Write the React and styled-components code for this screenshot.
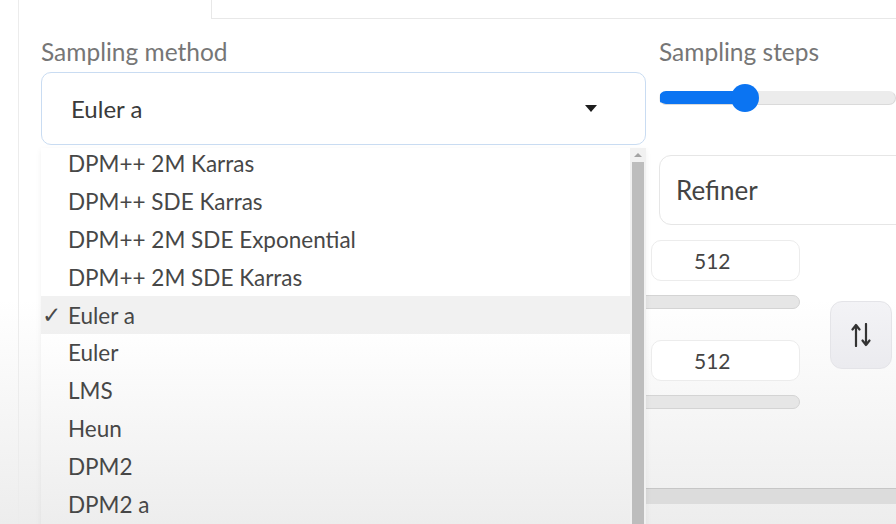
import React from 'react';
import styled, { createGlobalStyle } from 'styled-components';

const GlobalStyle = createGlobalStyle`
  html, body {
    margin: 0;
    padding: 0;
    background: #fff;
  }
  body {
    font-family: Lato, "Open Sans", sans-serif;
    color: #444;
  }
`;

const Page = styled.div`
  position: relative;
  width: 896px;
  height: 524px;
  overflow: hidden;
  background: linear-gradient(180deg, #fff 0, #fff 300px, #ededed 524px);
`;

const Panel = styled.div`
  margin-left: 18px;
  height: 100%;
  border-left: 1px solid #ececec;
`;

const TopBox = styled.div`
  margin-left: 192px;
  height: 18px;
  border-left: 1px solid #e8e8e8;
  border-bottom: 1px solid #e8e8e8;
  background: #fff;
`;

const Content = styled.div`
  padding-left: 22px;
`;

const TopGrid = styled.div`
  display: grid;
  grid-template-columns: 605px 1fr;
  column-gap: 13px;
  margin-top: 20px;
`;

const Field = styled.div`
  position: relative;
  display: flex;
  flex-direction: column;
`;

const Label = styled.div`
  font-size: 24.5px;
  line-height: 26px;
  color: #767676;
  margin-bottom: 7px;
  white-space: nowrap;
`;

const SelectBox = styled.div`
  box-sizing: border-box;
  height: 73px;
  display: flex;
  align-items: center;
  justify-content: space-between;
  padding: 0 48px 0 29px;
  border: 1px solid #c9dcf2;
  border-radius: 10px;
  background: #fff;
  font-size: 24px;
  color: #3a3a3a;
`;

const Caret = styled.span`
  width: 0;
  height: 0;
  border-left: 6px solid transparent;
  border-right: 6px solid transparent;
  border-top: 7px solid #1e1e1e;
`;

const Slider = styled.div`
  position: relative;
  margin-top: 12px;
  height: 28px;
  display: flex;
  align-items: center;
`;

const Track = styled.div`
  box-sizing: border-box;
  flex: 1;
  height: 14px;
  border-radius: 7px;
  border: 1px solid #dadada;
  background: ${p => (p.$value != null
    ? `linear-gradient(90deg, #0b74f2 0, #0b74f2 ${p.$value}px, #ececec ${p.$value}px)`
    : '#e5e5e5')};
  border-color: ${p => (p.$value != null ? 'transparent #dadada #dadada transparent' : '#d6d6d6')};
`;

const Thumb = styled.div`
  position: absolute;
  top: 0;
  width: 28px;
  height: 28px;
  border-radius: 50%;
  background: #0b74f2;
`;

const Dropdown = styled.div`
  position: absolute;
  top: calc(100% + 3px);
  left: 0;
  width: 605px;
  height: 400px;
  display: flex;
  overflow: hidden;
  background: linear-gradient(180deg, #fff 0, #fff 180px, #ededed 376px);
  box-shadow: 0 2px 6px rgba(0, 0, 0, 0.06);
  z-index: 5;
`;

const Options = styled.ul`
  flex: 1;
  list-style: none;
  margin: -3px 0 0;
  padding: 0;
`;

const Option = styled.li`
  display: flex;
  align-items: center;
  height: 37.8px;
  font-size: 22.5px;
  color: #474747;
  white-space: nowrap;
  background: ${p => (p.$selected ? 'rgba(0, 0, 0, 0.055)' : 'transparent')};
`;

const Check = styled.span`
  width: 26px;
  padding-left: 1px;
  font-family: "DejaVu Sans", sans-serif;
  font-size: 23px;
  color: #4a4a4a;
`;

const Scrollbar = styled.div`
  width: 16px;
  display: flex;
  flex-direction: column;
  align-items: center;
  background: #f1f1f1;
`;

const ScrollArrow = styled.span`
  margin-top: 5px;
  width: 0;
  height: 0;
  border-left: 4px solid transparent;
  border-right: 4px solid transparent;
  border-bottom: 4px solid #a3a3a3;
`;

const ScrollThumb = styled.div`
  margin-top: 5px;
  width: 12px;
  flex: 1;
  background: #bdbdbd;
`;

const LowerGrid = styled.div`
  display: grid;
  grid-template-columns: 560px 1fr;
  margin-top: 10px;
`;

const RightCol = styled.div`
  display: flex;
  flex-direction: column;
`;

const RefinerBox = styled.div`
  box-sizing: border-box;
  margin-left: 58px;
  height: 70px;
  margin-right: -20px;
  display: flex;
  align-items: center;
  padding-left: 16px;
  border: 1px solid #e6e6e6;
  border-radius: 12px;
  background: #fff;
  font-size: 26px;
  color: #444;
`;

const SizeRow = styled.div`
  display: flex;
  margin-top: 15px;
`;

const SizeCol = styled.div`
  width: 199px;
  display: flex;
  flex-direction: column;
`;

const NumberInput = styled.div`
  box-sizing: border-box;
  align-self: flex-end;
  width: 149px;
  height: 41px;
  margin-top: ${p => p.$top || 0}px;
  display: flex;
  align-items: center;
  padding-left: 42px;
  border: 1px solid #ececec;
  border-radius: 10px;
  background: #fff;
  font-size: 21px;
  color: #444;
`;

const SmallTrack = styled.div`
  box-sizing: border-box;
  margin-top: 14px;
  height: 14px;
  border-radius: 7px;
  border: 1px solid #d4d4d4;
  background: #e6e6e6;
`;

const SwapButton = styled.button`
  margin: 61px 0 0 30px;
  width: 62px;
  height: 68px;
  display: flex;
  align-items: center;
  justify-content: center;
  border: 1px solid #e4e4e8;
  border-radius: 12px;
  background: linear-gradient(180deg, #f3f3f6, #ebebef);
  color: #333;
  padding: 0;
`;

const BottomTrack = styled.div`
  margin-top: 79px;
  margin-right: -40px;
  height: 15px;
  border-top: 1px solid #c6c6c6;
  background: #dcdcdc;
`;

const SwapIcon = () => (
  <svg width="20" height="24" viewBox="0 0 20 24" fill="none" stroke="currentColor"
    strokeWidth="2.2" strokeLinecap="round" strokeLinejoin="round">
    <path d="M5 23V2M1.5 6.5L5 2l3.5 4.5" />
    <path d="M15 1v21M11.5 17.5L15 22l3.5-4.5" />
  </svg>
);

const samplers = [
  'DPM++ 2M Karras',
  'DPM++ SDE Karras',
  'DPM++ 2M SDE Exponential',
  'DPM++ 2M SDE Karras',
  'Euler a',
  'Euler',
  'LMS',
  'Heun',
  'DPM2',
  'DPM2 a',
];

const App = () => {
  const selected = 'Euler a';
  return (
    <>
      <GlobalStyle />
      <Page>
        <Panel>
          <TopBox />
          <Content>
            <TopGrid>
              <Field>
                <Label>Sampling method</Label>
                <SelectBox>
                  <span>{selected}</span>
                  <Caret />
                </SelectBox>
                <Dropdown>
                  <Options>
                    {samplers.map(name => (
                      <Option key={name} $selected={name === selected}>
                        <Check>{name === selected ? '✓' : ''}</Check>
                        {name}
                      </Option>
                    ))}
                  </Options>
                  <Scrollbar>
                    <ScrollArrow />
                    <ScrollThumb />
                  </Scrollbar>
                </Dropdown>
              </Field>
              <Field>
                <Label>Sampling steps</Label>
                <Slider>
                  <Track $value={86} />
                  <Thumb style={{ left: 72 }} />
                </Slider>
              </Field>
            </TopGrid>

            <LowerGrid>
              <div />
              <RightCol>
                <RefinerBox>Refiner</RefinerBox>
                <SizeRow>
                  <SizeCol>
                    <NumberInput>512</NumberInput>
                    <SmallTrack />
                    <NumberInput $top={31}>512</NumberInput>
                    <SmallTrack />
                  </SizeCol>
                  <SwapButton aria-label="swap">
                    <SwapIcon />
                  </SwapButton>
                </SizeRow>
                <BottomTrack />
              </RightCol>
            </LowerGrid>
          </Content>
        </Panel>
      </Page>
    </>
  );
};

export default App;
